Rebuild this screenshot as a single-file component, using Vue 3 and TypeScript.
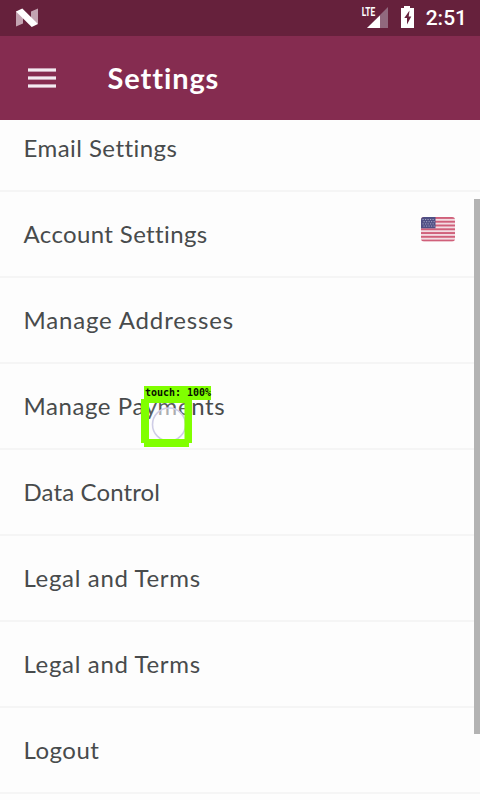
<script setup lang="ts">
interface Item {
  label: string
  spacing: number
  flag?: boolean
}

const items: Item[] = [
  { label: 'Email Settings', spacing: 0.45 },
  { label: 'Account Settings', spacing: 0.37, flag: true },
  { label: 'Manage Addresses', spacing: 0.83 },
  { label: 'Manage Payments', spacing: 0.58 },
  { label: 'Data Control', spacing: 0.12 },
  { label: 'Legal and Terms', spacing: 0.66 },
  { label: 'Legal and Terms', spacing: 0.66 },
  { label: 'Logout', spacing: 0.5 },
]
</script>

<template>
  <div class="screen">
    <header class="status">
      <svg class="nougat" width="24" height="20" viewBox="0 0 24 20">
        <path d="M1 3L8 8V15.5L1 18.5Z M16 3.5L23 0.5V16L16 11Z" fill="#c3a3b1" />
        <path d="M1 3.4L7.3 0.5L23 16L16.7 19Z" fill="#fff" />
      </svg>
      <div class="indicators">
        <svg width="60" height="24" viewBox="0 0 60 24">
          <path d="M28 1V22H7Z" fill="#91697e" />
          <path d="M20 9.5V22H7Z" fill="#fff" />
          <path d="M0 0H14.5V11.5H0Z" fill="#66213c" />
          <text class="lte" x="1.8" y="10" textLength="13.4" lengthAdjust="spacingAndGlyphs">LTE</text>
          <path d="M41 2H44V0H50V2H54V22H41Z" fill="#fff" />
          <path d="M49.5 4.5L44.3 12H47V18.5L51.3 10.5H48.7Z" fill="#66213c" />
        </svg>
        <span class="clock">2:51</span>
      </div>
    </header>
    <nav class="bar">
      <svg width="28" height="20" viewBox="0 0 28 20">
        <path d="M0 0H28V4H0ZM0 8H28V12H0ZM0 16H28V20H0Z" fill="#c79fb3" />
        <path d="M0 1H28V3H0ZM0 9H28V11H0ZM0 17H28V19H0Z" fill="#f4eaf0" />
      </svg>
      <h1 class="title">Settings</h1>
    </nav>
    <main class="list">
      <div v-for="(item, i) in items" :key="i" class="row">
        <span class="label" :style="{ letterSpacing: item.spacing + 'px' }">{{ item.label }}</span>
        <svg v-if="item.flag" class="flag" width="34" height="25" viewBox="0 0 34 25">
          <defs><clipPath id="flag-shape"><rect width="34" height="24.5" rx="3" /></clipPath></defs>
          <g clip-path="url(#flag-shape)">
            <rect width="34" height="25" fill="#f3dce2" />
            <rect v-for="n in 7" :key="n" :y="(n - 1) * 3.77" width="34" height="1.9" fill="#d0607a" />
            <rect width="14.5" height="11.3" fill="#4f4f84" />
            <path d="M1.5 2.5H14M2.5 4.7H14M1.5 6.9H14M2.5 9.1H14" stroke="#a5a5c4" stroke-width="1" stroke-dasharray="1.2 1.3" />
          </g>
        </svg>
      </div>
    </main>
    <div class="scrollbar"></div>
    <svg class="touch" width="72" height="62" viewBox="0 0 72 62">
      <rect x="8" y="17" width="36" height="37" fill="#fff" fill-opacity="0.1" />
      <circle cx="28" cy="38.5" r="16.5" fill="#fff" fill-opacity="0.5" stroke="#cfcde6" stroke-width="1.6" />
      <path d="M3 0H70V14H51V57H48V61H3V57H0V13H3ZM8 17V53H43.5V17Z" fill="#80ff00" fill-rule="evenodd" />
      <text class="touch-label" x="4" y="10" textLength="66">touch: 100%</text>
    </svg>
  </div>
</template>

<style>
body {
  margin: 0;
  overflow: hidden;
}
</style>

<style scoped>
.screen {
  position: relative;
  display: flex;
  flex-direction: column;
  width: 480px;
  height: 800px;
  overflow: hidden;
  background: #fdfdfd;
  font-family: Lato, sans-serif;
}
.status {
  display: flex;
  flex: none;
  align-items: center;
  justify-content: space-between;
  box-sizing: border-box;
  height: 36px;
  padding: 0 13px 0 15px;
  background: #66213c;
}
.indicators {
  display: flex;
  align-items: center;
  gap: 6px;
}
.lte {
  font: 700 12px Roboto, sans-serif;
  fill: #fff;
}
.clock {
  color: #fff;
  font: 500 21px/38px Roboto, sans-serif;
}
.bar {
  display: flex;
  flex: none;
  align-items: center;
  gap: 51.5px;
  box-sizing: border-box;
  height: 84px;
  padding-left: 28px;
  background: #852c50;
}
.bar svg {
  margin-bottom: 1px;
}
.title {
  margin: 0;
  color: #fff;
  font-size: 29px;
  font-weight: 700;
  letter-spacing: 0.9px;
  line-height: 84px;
}
.list {
  display: flex;
  flex: none;
  flex-direction: column;
  margin-top: -14px;
  clip-path: inset(14px 0 0);
}
.row {
  display: flex;
  align-items: center;
  justify-content: space-between;
  box-sizing: border-box;
  height: 86px;
  padding: 0 25px 0 23.5px;
  border-bottom: 2px solid #f5f5f5;
}
.label {
  color: #484b4c;
  font-size: 24px;
  line-height: 30px;
  white-space: nowrap;
}
.flag {
  margin-bottom: 9px;
}
.scrollbar {
  position: absolute;
  top: 199px;
  right: 0;
  width: 6px;
  height: 535px;
  background: #b3b3b3;
}
.touch {
  position: absolute;
  top: 386px;
  left: 141px;
}
.touch-label {
  font: 700 10px "DejaVu Sans Mono", monospace;
  fill: #081000;
}
</style>
